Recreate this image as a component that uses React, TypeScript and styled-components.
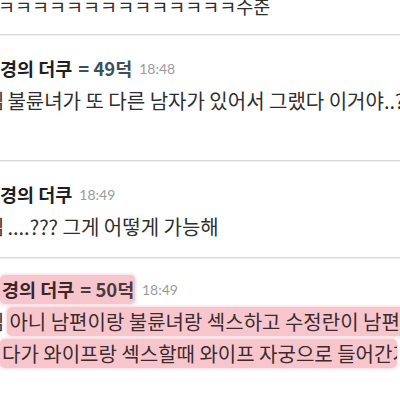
import React from "react";
import styled, { createGlobalStyle } from "styled-components";

const GlobalStyle = createGlobalStyle`
  html, body {
    margin: 0;
    padding: 0;
    background: #fff;
    overflow: hidden;
  }
`;

const KR = `"Noto Sans CJK KR", "Noto Sans", sans-serif`;

const Page = styled.div`
  width: 400px;
  height: 400px;
  overflow: hidden;
  font-family: ${KR};
  color: #2e2e2e;
`;

const TopLine = styled.div`
  margin: -10px 0 0 -2px;
  padding-bottom: 12px;
  height: 32px;
  line-height: 32px;
  font-size: 18.5px;
  white-space: nowrap;
`;

const Item = styled.div<{ $bottom: number }>`
  border-top: 1px solid #d8d8d8;
  box-shadow: inset 0 1px 0 #efefef;
  padding: 17px 0 ${(p) => p.$bottom}px;
`;

const Header = styled.div<{ $shift?: number }>`
  display: flex;
  align-items: center;
  height: 32px;
  margin-top: ${(p) => p.$shift ?? 0}px;
  white-space: nowrap;
`;

const Name = styled.span`
  font-size: 18.5px;
  font-weight: 700;
  color: #1f1f1f;
`;

const Level = styled.span`
  margin-left: 6px;
  font-size: 18.5px;
  font-weight: 700;
  color: #3e4f5c;
`;

const Time = styled.span`
  margin-left: 7px;
  font-family: Lato, sans-serif;
  font-size: 14px;
  color: #9b9b9b;
`;

const Line = styled.div`
  display: flex;
  align-items: center;
  height: 32px;
  font-size: 20px;
  white-space: nowrap;
`;

const Cut = styled.span`
  margin-left: -14px;
  margin-right: 3px;
  color: #2f3a42;
`;

const Mark = styled.span<{ $left?: number; $width?: string }>`
  display: inline-flex;
  align-items: center;
  flex: none;
  height: 29px;
  margin-left: ${(p) => p.$left ?? 0}px;
  width: ${(p) => p.$width ?? "auto"};
  padding: 0 4px 0 2px;
  box-sizing: border-box;
  background: #f7c6cd;
  border-radius: 5px;
  box-shadow: 0 0 3px 1px rgba(247, 198, 205, 0.7);
  color: #3b2a2e;
  overflow: hidden;
`;

const MarkName = styled(Name)`
  color: #3a2529;
`;

const MarkLevel = styled(Level)`
  color: #4a3a40;
`;

export default function App() {
  return (
    <Page>
      <GlobalStyle />
      <TopLine>ㅋㅋㅋㅋㅋㅋㅋㅋㅋㅋㅋㅋㅋㅋ수준</TopLine>

      <Item $bottom={44}>
        <Header>
          <Name>경의 더쿠</Name>
          <Level>= 49덕</Level>
          <Time>18:48</Time>
        </Header>
        <Line>
          <Cut>님</Cut>
          불륜녀가 또 다른 남자가 있어서 그랬다 이거야..?
        </Line>
      </Item>

      <Item $bottom={15}>
        <Header>
          <Name>경의 더쿠</Name>
          <Time>18:49</Time>
        </Header>
        <Line>
          <Cut>님</Cut>
          ....??? 그게 어떻게 가능해
        </Line>
      </Item>

      <Item $bottom={12}>
        <Header $shift={-2}>
          <Mark $left={0} $width="135px">
            <MarkName>경의 더쿠</MarkName>
            <MarkLevel>= 50덕</MarkLevel>
          </Mark>
          <Time>18:49</Time>
        </Header>
        <Line>
          <Cut>님</Cut>
          <Mark $left={0} $width="420px">
            아니 남편이랑 불륜녀랑 섹스하고 수정란이 남편 몸에
          </Mark>
        </Line>
        <Line>
          <Mark $left={0} $width="397px">
            다가 와이프랑 섹스할때 와이프 자궁으로 들어간거
          </Mark>
        </Line>
      </Item>
    </Page>
  );
}
